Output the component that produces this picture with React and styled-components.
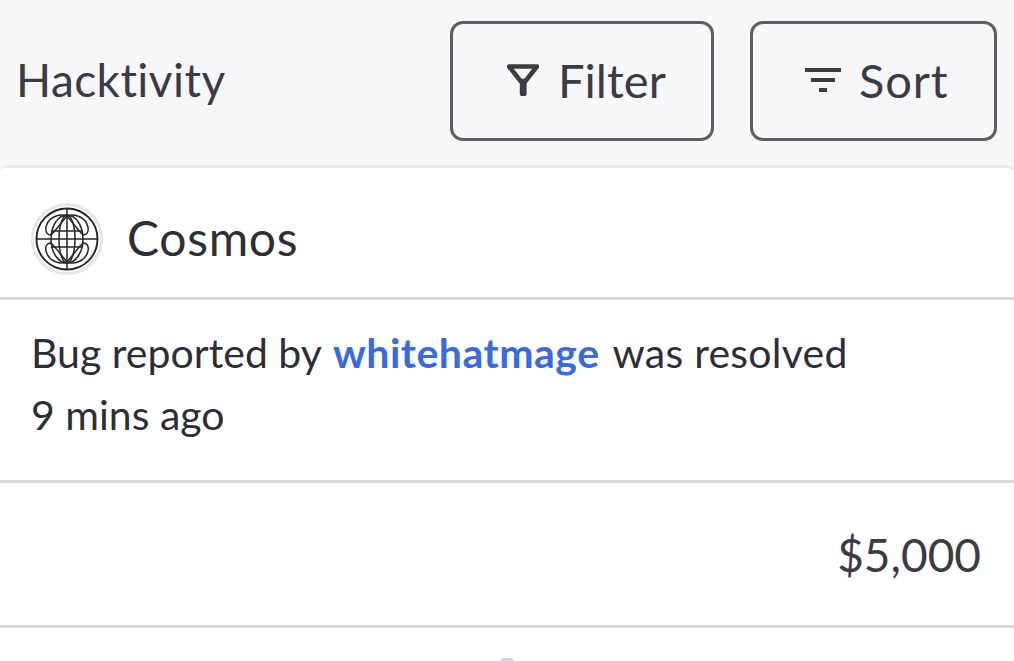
import React from "react";
import styled, { createGlobalStyle } from "styled-components";

const Global = createGlobalStyle`
  html, body { margin: 0; padding: 0; background: #fff; overflow: hidden; }
  body { font-family: "Lato", "Open Sans", sans-serif; color: #2f3038; }
`;
const Page = styled.div`
  width: 1014px;
  height: 661px;
  overflow: hidden;
  background: #f7f7f9;
`;
const Header = styled.header`
  height: 165px;
  box-sizing: border-box;
  padding: 21px 17px 0 16px;
  display: flex;
  align-items: flex-start;
`;
const Title = styled.h1`
  margin: 0;
  flex: 1;
  font-size: 46px;
  font-weight: 400;
  letter-spacing: 0.45px;
  line-height: 118px;
  color: #3a3b44;
`;
const Actions = styled.div`
  display: flex;
  gap: 36px;
`;
const ActionButton = styled.button`
  width: ${(p) => p.$width}px;
  height: 120px;
  box-sizing: border-box;
  border: 3px solid #5d5e68;
  border-radius: 13px;
  background: transparent;
  display: flex;
  align-items: center;
  justify-content: flex-start;
  gap: ${(p) => p.$gap}px;
  font-family: inherit;
  font-size: 47px;
  letter-spacing: ${(p) => p.$tracking}px;
  color: #3a3b44;
  padding: 0 0 3px ${(p) => p.$inset}px;
`;
const Card = styled.section`
  background: #fff;
  border-top: 3px solid #ebebed;
  border-radius: 8px 8px 0 0;
  height: 493px;
`;
const Row = styled.div`
  box-sizing: border-box;
  height: ${(p) => p.$height}px;
  border-bottom: 3px solid #d8d8da;
`;
const OrgRow = styled(Row)`
  display: flex;
  align-items: center;
  gap: 24px;
  padding: 13px 0 0 31px;
`;
const OrgName = styled.span`
  font-size: 48px;
  letter-spacing: 0.7px;
  line-height: 58px;
  margin-top: -2px;
  color: #2d2e36;
`;
const Body = styled(Row)`
  padding: 22px 31px 0;
  font-size: 41px;
  line-height: 62px;
  color: #2d2e36;
`;
const Line = styled.div`
  display: flex;
  gap: 12px;
`;
const Hacker = styled.a`
  color: #3a6ae0;
  font-weight: 700;
  letter-spacing: 0.5px;
  margin: 0 1px 0 -1px;
`;
const Resolved = styled.span`
  letter-spacing: 0.25px;
`;
const Amount = styled(Row)`
  display: flex;
  align-items: center;
  justify-content: flex-end;
  padding: 0 33px 0 0;
  font-size: 46px;
  color: #3a3b44;
`;
const Next = styled.div`
  display: flex;
  justify-content: center;
  padding-top: 30px;
`;
const Dot = styled.div`
  width: 14px;
  height: 4px;
  border-radius: 7px 7px 0 0;
  background: #d2d2d6;
`;

const FilterIcon = () => (
  <svg width="32" height="32" viewBox="0 0 32 32" fill="none">
    <path d="M2 2.500h28L18.500 17h-5z" stroke="#3a3b44" strokeWidth="4.500" strokeLinejoin="round" />
    <path d="M12.800 16h6.800v13.500a3.400 3 0 0 1-6.800 0z" fill="#3a3b44" />
  </svg>
);
const SortIcon = () => (
  <svg width="36" height="26" viewBox="0 0 36 26">
    <path d="M0 1h36v4H0zM6 11h24v4H6zM14 21h8v4h-8z" fill="#3a3b44" />
  </svg>
);
const Globe = () => (
  <svg width="72" height="72" viewBox="0 0 72 72" fill="none">
    <circle cx="36" cy="36" r="34.500" fill="#fff" stroke="#e6e6e8" strokeWidth="3" />
    <g stroke="#26262a" strokeWidth="1.500">
      <circle cx="36" cy="36" r="30.500" strokeWidth="1.900" />
      <path d="M5 36h62M36 5v62" />
      <ellipse cx="36" cy="36" rx="16" ry="24" />
      <ellipse cx="36" cy="36" rx="8" ry="24" />
      <path d="M20 28h32M20 44h32" />
      <path d="M36 13c-9-3-19 2-21 11-1 5 1 8 5 8 6-6 10-12 16-19z" />
      <path d="M36 13c9-3 19 2 21 11 1 5-1 8-5 8-6-6-10-12-16-19z" />
      <path d="M36 59c-9 3-19-2-21-11-1-5 1-8 5-8 6 6 10 12 16 19z" />
      <path d="M36 59c9 3 19-2 21-11 1-5-1-8-5-8-6 6-10 12-16 19z" />
    </g>
  </svg>
);

export default function App() {
  return (
    <Page>
      <Global />
      <Header>
        <Title>Hacktivity</Title>
        <Actions>
          <ActionButton $width={264} $gap={19} $inset={54} $tracking={0.05}>
            <FilterIcon />
            Filter
          </ActionButton>
          <ActionButton $width={247} $gap={18} $inset={52} $tracking={0.9}>
            <SortIcon />
            Sort
          </ActionButton>
        </Actions>
      </Header>
      <Card>
        <OrgRow $height={132}>
          <Globe />
          <OrgName>Cosmos</OrgName>
        </OrgRow>
        <Body $height={183}>
          <Line>
            <span>Bug reported by</span>
            <Hacker>whitehatmage</Hacker>
            <Resolved>was resolved</Resolved>
          </Line>
          <div>9 mins ago</div>
        </Body>
        <Amount $height={145}>$5,000</Amount>
        <Next>
          <Dot />
        </Next>
      </Card>
    </Page>
  );
}
